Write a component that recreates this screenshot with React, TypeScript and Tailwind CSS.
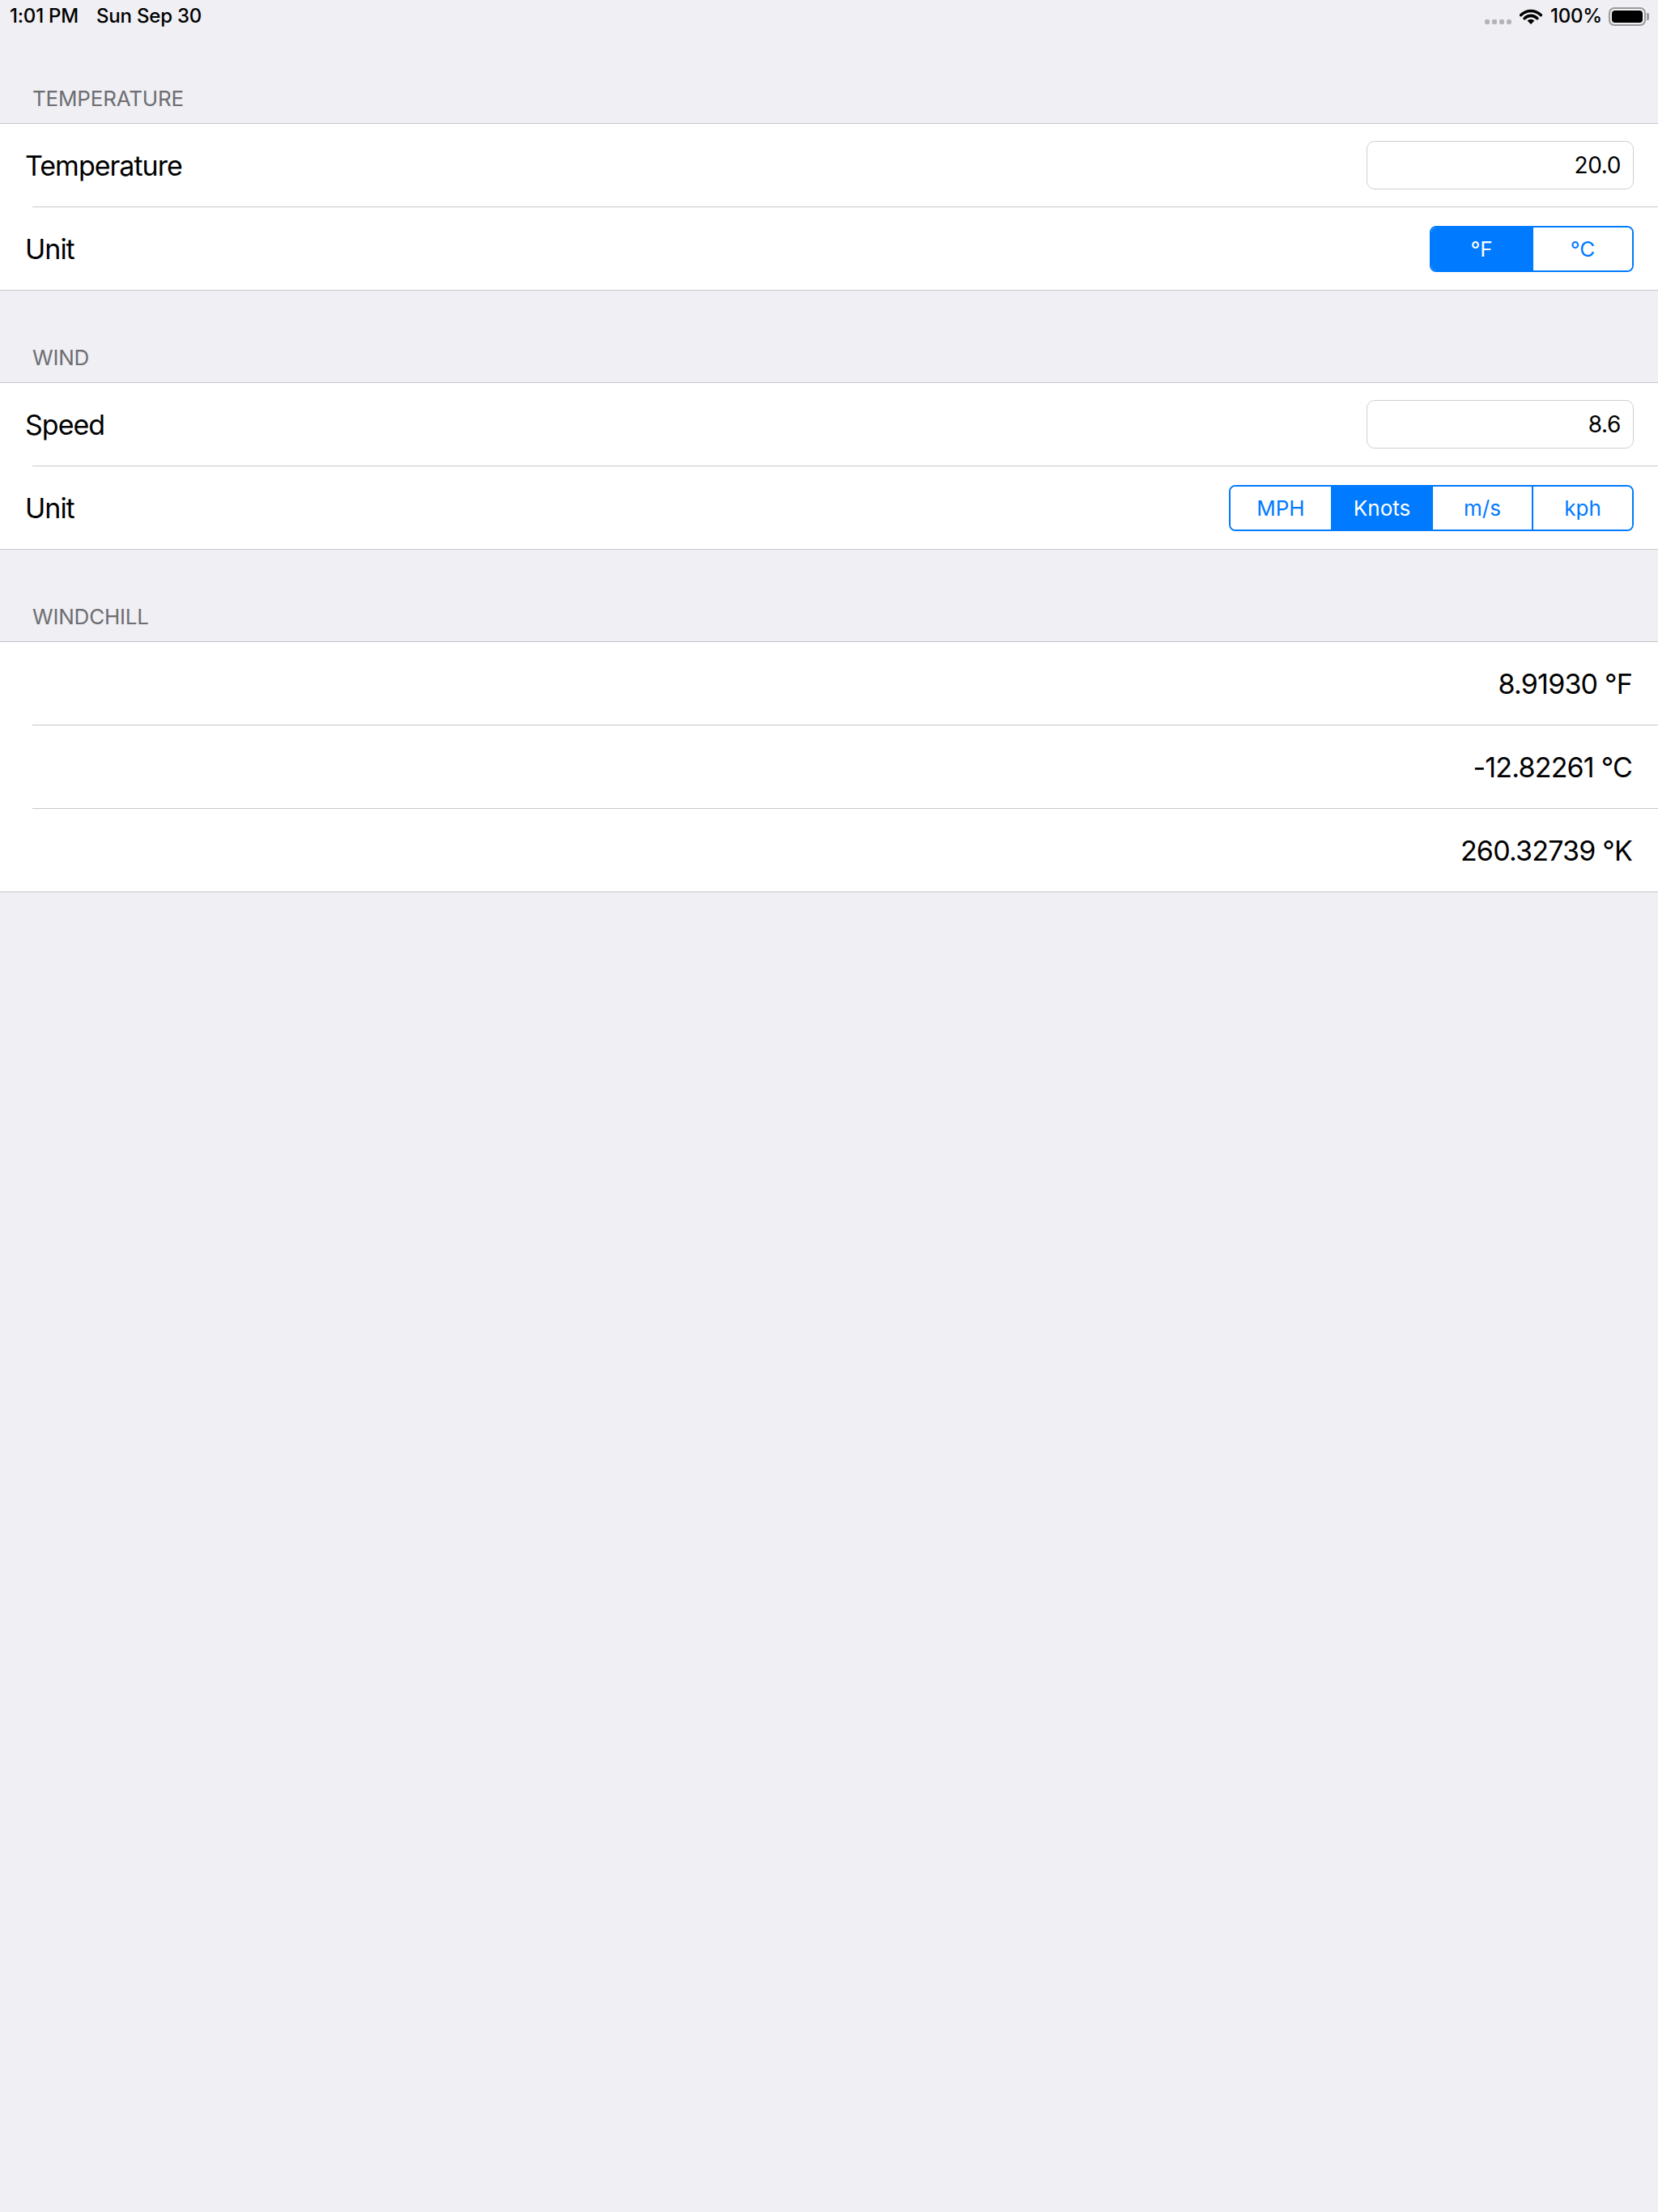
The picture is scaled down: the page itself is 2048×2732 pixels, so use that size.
import React from 'react';

const font = "font-['Inter','Liberation_Sans',sans-serif]";

function WifiIcon() {
  return (
    <svg width="28" height="20" viewBox="0 0 28 20" className="shrink-0">
      <path d="M1.8 8.6 A17 17 0 0 1 26.2 8.6" fill="none" stroke="#000" strokeWidth="3.6" strokeLinecap="round" />
      <path d="M6.1 12.7 A11 11 0 0 1 21.9 12.7" fill="none" stroke="#000" strokeWidth="3.6" strokeLinecap="round" />
      <path d="M14 20 L9.6 15.6 A6.2 6.2 0 0 1 18.4 15.6 Z" fill="#000" />
    </svg>
  );
}

function StatusBar() {
  return (
    <div className="flex h-[40px] items-center justify-between pl-[12px] pr-[11px] text-[24px] font-medium tracking-[-0.2px] text-black">
      <div className="flex items-center gap-[22px]">
        <span>1:01 PM</span>
        <span>Sun Sep 30</span>
      </div>
      <div className="flex items-center">
        <div className="mr-[10px] mt-[14px] flex gap-[3px]">
          {[0, 1, 2, 3].map((i) => (
            <div key={i} className="h-[6px] w-[6px] rounded-[2px] bg-[#b4b4b8]" />
          ))}
        </div>
        <WifiIcon />
        <span className="ml-[10px]">100%</span>
        <div className="ml-[8px] flex items-center">
          <div className="flex h-[23px] w-[46px] items-center rounded-[7px] border-2 border-[#9b9b9b] p-[2px]">
            <div className="h-full w-full rounded-[4px] bg-black" />
          </div>
          <div className="ml-[1px] h-[9px] w-[3px] rounded-r-[2px] bg-[#9b9b9b]" />
        </div>
      </div>
    </div>
  );
}

function SectionHeader({ title }: { title: string }) {
  return (
    <div className="flex h-[113px] items-end pb-[14px] pl-[40px] text-[26px] leading-[32px] tracking-[-0.2px] text-[#6d6d72]">
      {title}
    </div>
  );
}

function Row({ label, children, last }: { label?: string; children: React.ReactNode; last?: boolean }) {
  return (
    <div className="pl-[31px]">
      <div className="flex h-[102px] items-center justify-between pr-[30px]">
        <span className="text-[34px] tracking-[-1px] text-black">{label}</span>
        {children}
      </div>
      {!last && <div className="ml-[9px] h-px bg-[#c8c7cc]" />}
    </div>
  );
}

function TextField({ value }: { value: string }) {
  return (
    <div className="flex h-[60px] w-[330px] items-center justify-end rounded-[10px] border border-[#cfcfd3] bg-white pr-[15px] text-[28px] tracking-[-0.4px] text-black">
      {value}
    </div>
  );
}

function Segmented({ options, selected }: { options: string[]; selected: number }) {
  return (
    <div className="flex h-[57px] overflow-hidden rounded-[8px] border-2 border-[#007aff]">
      {options.map((opt, i) => (
        <div
          key={opt}
          className={
            'flex w-[124px] items-center justify-center text-[26px] ' +
            (i > 0 ? 'border-l-2 border-[#007aff] ' : '') +
            (i === selected ? 'bg-[#007aff] text-white' : 'bg-white text-[#007aff]')
          }
        >
          {opt}
        </div>
      ))}
    </div>
  );
}

function Group({ children }: { children: React.ReactNode }) {
  return <div className="border-y border-[#c8c7cc] bg-white">{children}</div>;
}

function Value({ text }: { text: string }) {
  return <span className="ml-auto pr-[2px] text-[34px] tracking-[-0.8px] text-black">{text}</span>;
}

export default function App() {
  return (
    <div className={`min-h-[2732px] w-[2048px] bg-[#efeff4] ${font}`}>
      <StatusBar />

      <div className="-mt-px">
        <SectionHeader title="TEMPERATURE" />
      </div>
      <Group>
        <Row label="Temperature">
          <TextField value="20.0" />
        </Row>
        <Row label="Unit" last>
          <Segmented options={['°F', '°C']} selected={0} />
        </Row>
      </Group>

      <SectionHeader title="WIND" />
      <Group>
        <Row label="Speed">
          <TextField value="8.6" />
        </Row>
        <Row label="Unit" last>
          <Segmented options={['MPH', 'Knots', 'm/s', 'kph']} selected={1} />
        </Row>
      </Group>

      <SectionHeader title="WINDCHILL" />
      <Group>
        <Row>
          <Value text="8.91930 °F" />
        </Row>
        <Row>
          <Value text="-12.82261 °C" />
        </Row>
        <Row last>
          <Value text="260.32739 °K" />
        </Row>
      </Group>
    </div>
  );
}
